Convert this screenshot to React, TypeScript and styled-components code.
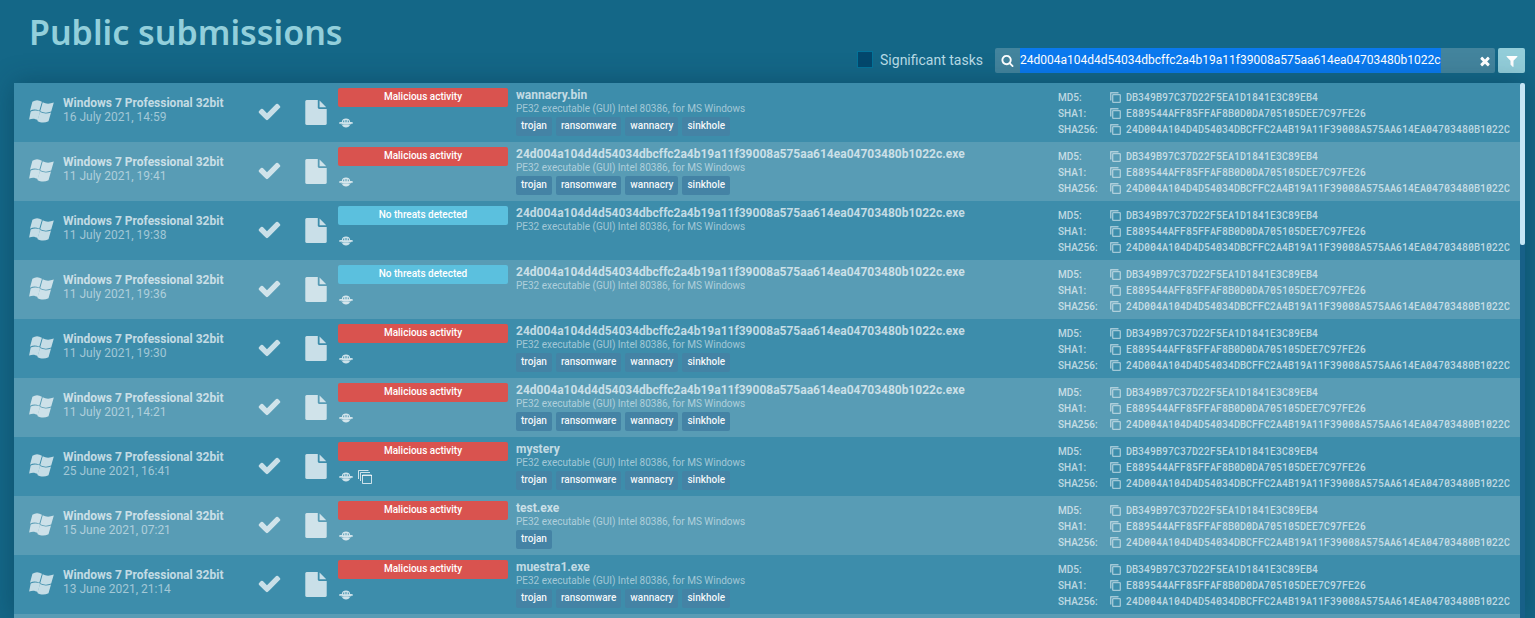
import React, { useEffect, useRef } from "react";
import styled, { createGlobalStyle } from "styled-components";

const GlobalStyle = createGlobalStyle`
  * { box-sizing: border-box; }
  body {
    margin: 0;
    background: #146787;
    color: #fff;
    font-family: Roboto, "Liberation Sans", sans-serif;
    font-size: 12px;
    line-height: 16px;
    overflow: hidden;
  }
`;

const Page = styled.main`
  display: flex;
  flex-direction: column;
  height: 100vh;
  padding: 0 10px 0 14px;
  overflow: hidden;
`;

const Header = styled.header`
  display: flex;
  justify-content: space-between;
  align-items: flex-end;
  height: 83px;
  padding: 0 0 10px 15px;
  flex: none;
`;

const Title = styled.h1`
  margin: 0;
  align-self: flex-start;
  padding-top: 8px;
  color: #92cfdb;
  font: 600 34px/48px "Noto Sans", "Open Sans", sans-serif;
`;

const Toolbar = styled.form`
  display: flex;
  align-items: center;
`;

const TaskLabel = styled.label`
  display: flex;
  align-items: center;
  gap: 7px;
  margin-right: 12px;
  padding-bottom: 2px;
  color: #b9dce6;
  font-size: 14px;
`;

const Checkbox = styled.input`
  appearance: none;
  width: 16px;
  height: 17px;
  margin: 0;
  border: 1px solid #04739a;
  background: #03486d;
`;

const SearchBox = styled.div`
  display: flex;
  align-items: center;
  width: 500px;
  height: 25px;
  margin-right: 3px;
  padding-right: 3px;
  border-radius: 2px;
  background: #43849d;
`;

const SearchInput = styled.input`
  flex: 1;
  min-width: 0;
  height: 25px;
  padding: 0;
  border: 0;
  outline: 0;
  background: none;
  color: #fff;
  font: 12px/25px Roboto, "Liberation Sans", sans-serif;
  &::selection { background: rgba(10, 120, 238, 0.996); color: #fff; }
`;

const IconButton = styled.button`
  display: flex;
  align-items: center;
  justify-content: center;
  width: ${(p: { $width: number }) => p.$width}px;
  height: 25px;
  padding: 0;
  border: 0;
  background: none;
  color: #fff;
`;

const FilterButton = styled(IconButton)`
  border-radius: 2px;
  background: #92cdd9;
`;

const Panel = styled.section`
  display: flex;
  flex: 1;
  min-height: 0;
  box-shadow: 0 0 25px rgba(0, 40, 60, 0.35);
`;

const ListArea = styled.div`
  flex: 1;
  min-width: 0;
  overflow: hidden;
`;

const ScrollTrack = styled.div`
  width: 5px;
  background: #176088;
`;

const ScrollThumb = styled.div`
  height: 162px;
  border-radius: 2px;
  background: #c3e4f4;
`;

const Table = styled.table`
  width: 100%;
  table-layout: fixed;
  border-collapse: collapse;
`;

const Row = styled.tr`
  height: 59px;
  background: #3d8dab;
  &:nth-child(even) { background: #589cb5; }
`;

const Cell = styled.td`
  padding: 0;
  vertical-align: top;
`;

const System = styled.div`
  display: flex;
  gap: 9px;
  padding: 13px 0 0 15px;
  color: rgba(255, 255, 255, 0.7);
  svg { margin-top: 4px; }
`;

const SystemText = styled.div`
  font-size: 12px;
  line-height: 14px;
`;

const OsName = styled.div`
  font-weight: 700;
`;

const Faded = styled.div`
  color: rgba(255, 255, 255, 0.53);
`;

const StateIcon = styled.div`
  padding-top: ${(p: { $top: number }) => p.$top}px;
  color: rgba(255, 255, 255, 0.72);
  svg { display: block; }
`;

const Verdict = styled.div`
  height: 19px;
  margin: 5px 8px 0 0;
  border-radius: 2px;
  background: ${(p: { $threat: boolean }) => (p.$threat ? "#d9534f" : "#5bc0de")};
  font-size: 10px;
  font-weight: 500;
  line-height: 18px;
  text-align: center;
`;

const Indicators = styled.div`
  display: flex;
  align-items: center;
  gap: 5px;
  height: 20px;
  margin-top: 6px;
  padding-left: 1px;
  color: rgba(255, 255, 255, 0.75);
`;

const FileName = styled.div`
  padding-top: 5px;
  color: rgba(255, 255, 255, 0.7);
  font-weight: 700;
  line-height: 14px;
`;

const FileType = styled(Faded)`
  font-size: 10px;
  line-height: 14px;
`;

const Tags = styled.div`
  display: flex;
  gap: 4px;
  margin-top: 1px;
`;

const Tag = styled.span`
  height: 19px;
  padding: 0 5px;
  border-radius: 2px;
  background: #4483a5;
  color: rgba(255, 255, 255, 0.95);
  font-size: 10px;
  font-weight: 500;
  line-height: 18px;
`;

const Hashes = styled.dl`
  display: grid;
  grid-template-columns: 52px 1fr;
  margin: 0;
  padding-top: 7px;
  color: rgba(255, 255, 255, 0.68);
  font-size: 10px;
`;

const HashLabel = styled.dt`
  font-weight: 500;
`;

const HashValue = styled.dd`
  display: flex;
  align-items: center;
  gap: 5px;
  margin: 0;
  font-family: "Roboto Mono", "DejaVu Sans Mono", monospace;
  font-weight: 500;
`;

const CopyButton = styled.button`
  display: flex;
  padding: 0 0 1px;
  border: 0;
  background: none;
  color: rgba(255, 255, 255, 0.52);
`;

const Glyph = ({ d, size }: { d: string; size: number }) => (
  <svg width={size} height={size} viewBox="0 0 1792 1792" fill="currentColor" aria-hidden="true">
    <path d={d} />
  </svg>
);

const CHECK = "M1671 566q0 40-28 68l-724 724-136 136q-28 28-68 28t-68-28l-136-136-362-362q-28-28-28-68t28-68l136-136q28-28 68-28t68 28l294 295 656-657q28-28 68-28t68 28l136 136q28 28 28 68z";
const SEARCH = "M1216 832q0-185-131.5-316.5t-316.5-131.5-316.5 131.5-131.5 316.5 131.5 316.5 316.5 131.5 316.5-131.5 131.5-316.5zm512 832q0 52-38 90t-90 38q-54 0-90-38l-343-342q-179 124-399 124-143 0-273.5-55.5t-225-150-150-225-55.5-273.5 55.5-273.5 150-225 225-150 273.5-55.5 273.5 55.5 225 150 150 225 55.5 273.5q0 220-124 399l343 343q37 37 37 90z";
const TIMES = "M1490 1322q0 40-28 68l-136 136q-28 28-68 28t-68-28l-294-294-294 294q-28 28-68 28t-68-28l-136-136q-28-28-28-68t28-68l294-294-294-294q-28-28-28-68t28-68l136-136q28-28 68-28t68 28l294 294 294-294q28-28 68-28t68 28l136 136q28 28 28 68t-28 68l-294 294 294 294q28 28 28 68z";
const FILTER = "M1595 295q17 41-14 70l-493 493v742q0 42-39 59-13 5-25 5-27 0-45-19l-256-256q-19-19-19-45v-486l-493-493q-31-29-14-70 17-39 59-39h1280q42 0 59 39z";
const FILE = "M1152 512v-472q22 14 36 28l408 408q14 14 28 36h-472zm-128 32q0 40 28 68t68 28h544v1056q0 40-28 68t-68 28h-1344q-40 0-68-28t-28-68v-1600q0-40 28-68t68-28h800v544z";

const WindowsFlag = () => (
  <svg width="25" height="23" viewBox="0 0 25 23" fill="currentColor" aria-hidden="true">
    <path d="M3.400 1.800C6.500-.2 9.600-.2 12.900 1.800L10.300 10.800C7.300 9.200 4.300 9.100 1 10.700z" />
    <path d="M13.700 2.300C17 4.200 20.800 4 24.800 2.600L22.200 11.600C18.500 13.200 14.800 13.200 11.200 11.300z" />
    <path d="M.7 11.500C4 9.900 7.300 10.100 10.100 11.600L7.700 20.300C5 18.500 2.500 18.300-.9 19.600z" transform="translate(1 0)" />
    <path d="M11 12.100C14.600 14 18.300 14 22 12.500L19.500 21.200C15.800 22.900 11.800 22.800 8.400 20.900z" />
  </svg>
);

const Ufo = () => (
  <svg width="14" height="10" viewBox="0 0 14 10" fill="currentColor" aria-hidden="true">
    <path fillRule="evenodd" d="M2.800 4C3.200 1.500 4.600.6 7 .6s3.800.9 4.200 3.400c1.800.1 2.800.4 2.800 1S12.700 6.200 7 6.200 0 5.700 0 5s1-.9 2.800-1zM4.200 2.800v1.500h1V2.300zM6.500 2v2.300h1V2zM8.800 2.300v2h1V2.800z" />
    <path opacity=".6" d="M1.500 6h11c-.5.800-2 1.100-5.500 1.100S2 6.800 1.500 6z" />
    <path d="M3 7h8c-.5 1.500-2 2.400-4 2.400S3.500 8.500 3 7z" />
  </svg>
);

const Windows = () => (
  <svg width="14" height="14" viewBox="0 0 14 14" fill="none" stroke="currentColor" aria-hidden="true">
    <path d="M.5 9V.5H10.500M2.500 11V2.500H12" />
    <path d="M4.500 5h9v8.500h-9z" />
    <path d="M4 5.500h10" />
  </svg>
);

const Copy = () => (
  <svg width="11" height="11" viewBox="0 0 11 11" fill="none" stroke="currentColor" aria-hidden="true">
    <path strokeWidth="1.500" d="M.7 8.500V1.200q0-.5.500-.5H8.500" />
    <rect strokeWidth="1.300" x="2.700" y="2.700" width="7.600" height="7.600" rx=".6" />
  </svg>
);

const SHA256 = "24d004a104d4d54034dbcffc2a4b19a11f39008a575aa614ea04703480b1022c";
const HASHES: [string, string][] = [
  ["MD5", "DB349B97C37D22F5EA1D1841E3C89EB4"],
  ["SHA1", "E889544AFF85FFAF8B0D0DA705105DEE7C97FE26"],
  ["SHA256", SHA256.toUpperCase()],
];
const ALL = ["trojan", "ransomware", "wannacry", "sinkhole"];

type Task = { date: string; name: string; tags: string[]; threat?: boolean; multi?: boolean };
const TASKS: Task[] = [
  { date: "16 July 2021, 14:59", name: "wannacry.bin", tags: ALL, threat: true },
  { date: "11 July 2021, 19:41", name: SHA256 + ".exe", tags: ALL, threat: true },
  { date: "11 July 2021, 19:38", name: SHA256 + ".exe", tags: [] },
  { date: "11 July 2021, 19:36", name: SHA256 + ".exe", tags: [] },
  { date: "11 July 2021, 19:30", name: SHA256 + ".exe", tags: ALL, threat: true },
  { date: "11 July 2021, 14:21", name: SHA256 + ".exe", tags: ALL, threat: true },
  { date: "25 June 2021, 16:41", name: "mystery", tags: ALL, threat: true, multi: true },
  { date: "15 June 2021, 07:21", name: "test.exe", tags: ["trojan"], threat: true },
  { date: "13 June 2021, 21:14", name: "muestra1.exe", tags: ALL, threat: true },
];

const TaskRow = ({ task }: { task: Task }) => (
  <Row>
    <Cell>
      <System>
        <WindowsFlag />
        <SystemText>
          <OsName>Windows 7 Professional 32bit</OsName>
          <Faded>{task.date}</Faded>
        </SystemText>
      </System>
    </Cell>
    <Cell><StateIcon $top={16}><Glyph d={CHECK} size={25} /></StateIcon></Cell>
    <Cell>
      <StateIcon $top={17}>
        <svg width="22" height="25" viewBox="128 0 1536 1792" fill="currentColor" aria-hidden="true"><path d={FILE} /></svg>
      </StateIcon>
    </Cell>
    <Cell>
      <Verdict $threat={!!task.threat}>{task.threat ? "Malicious activity" : "No threats detected"}</Verdict>
      <Indicators><Ufo />{task.multi && <Windows />}</Indicators>
    </Cell>
    <Cell>
      <FileName>{task.name}</FileName>
      <FileType>PE32 executable (GUI) Intel 80386, for MS Windows</FileType>
      <Tags>{task.tags.map((t) => <Tag key={t}>{t}</Tag>)}</Tags>
    </Cell>
    <Cell>
      <Hashes>
        {HASHES.map(([label, value]) => (
          <React.Fragment key={label}>
            <HashLabel>{label}:</HashLabel>
            <HashValue>
              <CopyButton type="button" aria-label={`Copy ${label}`}><Copy /></CopyButton>
              {value}
            </HashValue>
          </React.Fragment>
        ))}
      </Hashes>
    </Cell>
  </Row>
);

export default function App() {
  const search = useRef<HTMLInputElement>(null);
  useEffect(() => {
    search.current?.focus();
    search.current?.select();
  }, []);

  return (
    <Page>
      <GlobalStyle />
      <Header>
        <Title>Public submissions</Title>
        <Toolbar onSubmit={(e) => e.preventDefault()}>
          <TaskLabel><Checkbox type="checkbox" />Significant tasks</TaskLabel>
          <SearchBox>
            <IconButton $width={25} type="submit" aria-label="Search"><Glyph d={SEARCH} size={13} /></IconButton>
            <SearchInput ref={search} aria-label="Search submissions" defaultValue={SHA256} spellCheck={false} />
            <IconButton $width={14} type="reset" aria-label="Clear"><Glyph d={TIMES} size={14} /></IconButton>
          </SearchBox>
          <FilterButton $width={27} type="button" aria-label="Filter"><Glyph d={FILTER} size={14} /></FilterButton>
        </Toolbar>
      </Header>
      <Panel>
        <ListArea>
          <Table>
            <colgroup>
              <col style={{ width: 243 }} />
              <col style={{ width: 48 }} />
              <col style={{ width: 33 }} />
              <col style={{ width: 178 }} />
              <col />
              <col style={{ width: 462 }} />
            </colgroup>
            <tbody>
              {TASKS.map((t) => <TaskRow key={t.date} task={t} />)}
              <Row><Cell colSpan={6} /></Row>
            </tbody>
          </Table>
        </ListArea>
        <ScrollTrack><ScrollThumb /></ScrollTrack>
      </Panel>
    </Page>
  );
}
